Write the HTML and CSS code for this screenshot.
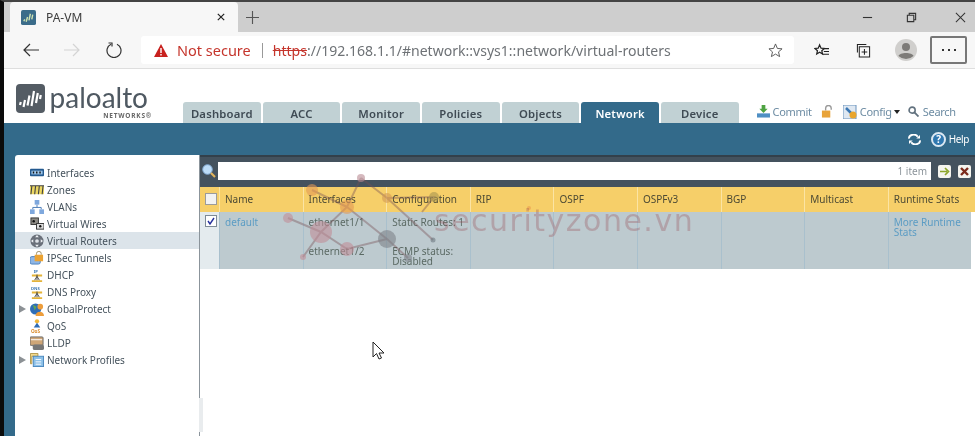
FILE: index.html
```html
<!DOCTYPE html>
<html lang="en">
<head>
<meta charset="utf-8">
<title>PA-VM</title>
<link rel="stylesheet" href="styles.css">
</head>
<body>
<div class="frame">
  <div class="tabstrip">
    <div class="tab">
      <svg class="favicon" viewBox="0 0 16 16"><rect width="16" height="16" rx="2" fill="#3b6c8a"/><path d="M3 12l1-2M5.500 12.500l1.500-5M8.500 11l1.500-7M11.500 10l1-5" stroke="#cfe3b0" stroke-width="1.500"/></svg>
      <span class="tab-title">PA-VM</span>
      <svg class="tab-close" viewBox="0 0 10 10"><path d="M1 1l8 8M9 1l-8 8" stroke="#222" stroke-width="1.500"/></svg>
    </div>
    <svg class="newtab" viewBox="0 0 14 14"><path d="M7 0v14M0 7h14" stroke="#555" stroke-width="1.200"/></svg>
    <div class="winbtns">
      <svg class="win" viewBox="0 0 12 12"><path d="M1 6h10" stroke="#333" stroke-width="1.200"/></svg>
      <svg class="win" viewBox="0 0 12 12"><path d="M1.500 3.500h7v7h-7zM3.500 3.500v-2h7v7h-2" fill="none" stroke="#333" stroke-width="1.200"/></svg>
      <svg class="win win-close" viewBox="0 0 12 12"><path d="M1 1l10 10M11 1L1 11" stroke="#333" stroke-width="1.100"/></svg>
    </div>
  </div>
  <div class="toolbar">
    <svg class="nav nav-back" viewBox="0 0 16 14"><path d="M16 7H1M7 1L1 7l6 6" fill="none" stroke="#333" stroke-width="1.200"/></svg>
    <svg class="nav nav-fwd" viewBox="0 0 16 14"><path d="M0 7h15M9 1l6 6-6 6" fill="none" stroke="#d4d4d4" stroke-width="1.200"/></svg>
    <svg class="nav nav-reload" viewBox="0 0 16 16"><path d="M5 2.200A7 7 0 1 0 11 2.200" fill="none" stroke="#333" stroke-width="1.200"/><path d="M2.500 1H6v3.500" fill="none" stroke="#333" stroke-width="1.200"/></svg>
    <div class="address">
      <svg class="warn" viewBox="0 0 14 13"><path d="M7 0l7 13H0z" fill="#c8211e"/><path d="M6.300 4h1.400v5H6.300zM6.300 10h1.400v1.500H6.300z" fill="#fff"/></svg>
      <span class="notsecure">Not secure</span>
      <span class="divider"></span>
      <span class="url"><s class="https">https</s>://192.168.1.1/#network::vsys1::network/virtual-routers</span>
      <svg class="addr-star" viewBox="0 0 16 16"><path d="M8 1l2 4.800 5 .4-3.800 3.300 1.200 5L8 11.800 3.600 14.500l1.200-5L1 6.200l5-.4z" fill="none" stroke="#555" stroke-width="1"/></svg>
    </div>
    <svg class="tool tool-fav" viewBox="0 0 16 16"><path d="M6 2l1.500 3.500 3.500.3-2.700 2.400.8 3.500L6 9.900 2.900 11.700l.8-3.500L1 5.800l3.500-.3z" fill="none" stroke="#222" stroke-width="1.300"/><path d="M10.500 6H16M10.500 9H16M9 12h7" stroke="#222" stroke-width="1.100"/></svg>
    <svg class="tool tool-col" viewBox="0 0 16 16"><path d="M1.500 10V1.500H11M3.500 4h11v11h-11z" fill="none" stroke="#222" stroke-width="1.100"/><path d="M9 6.500v6M6 9.500h6" stroke="#222" stroke-width="1.100"/></svg>
    <svg class="avatar" viewBox="0 0 22 22"><circle cx="11" cy="11" r="11" fill="#d0cfcd"/><circle cx="11" cy="8" r="4" fill="#7d7b78"/><path d="M3.500 17c1-4 14-4 15 0a11 11 0 0 1-15 0z" fill="#7d7b78"/></svg>
    <div class="menu-btn"><i></i><i></i><i></i></div>
  </div>
  <div class="page">
    <div class="pa-head">
      <div class="logo">
        <svg class="logo-mark" viewBox="0 0 29 29"><rect width="29" height="29" rx="4" fill="#545c64"/><path d="M4 21l.8-3M7.500 23l1.500-7M11.500 21.500l2-10M15.500 22l2.500-15M20 19l1.800-10M24 15l.8-4" stroke="#fff" stroke-width="2.200"/></svg>
        <div class="logo-words">
          <span class="logo-name">paloalto</span>
          <span class="logo-sub">NETWORKS&reg;</span>
        </div>
      </div>
      <nav class="pa-tabs">
        <span class="pa-tab">Dashboard</span>
        <span class="pa-tab">ACC</span>
        <span class="pa-tab">Monitor</span>
        <span class="pa-tab">Policies</span>
        <span class="pa-tab">Objects</span>
        <span class="pa-tab is-active">Network</span>
        <span class="pa-tab">Device</span>
      </nav>
      <div class="pa-tools">
        <svg class="pa-i" viewBox="0 0 14 14"><path d="M5 0h4v4h2.500L7 8.500 2.500 4H5z" fill="#4ea342"/><path d="M0 9h14v4.500H0z" fill="#4f8fc4"/></svg>
        <span class="pa-tool">Commit</span>
        <svg class="pa-i pa-lock" viewBox="0 0 14 14"><path d="M5 6V3.500a3 3 0 0 1 6 0V5" fill="none" stroke="#999" stroke-width="1.500"/><rect x="1" y="6" width="9" height="7.500" fill="#e8a33a"/></svg>
        <svg class="pa-i pa-config" viewBox="0 0 14 14"><rect width="13" height="14" fill="#dfe8f2" stroke="#6b93bd"/><path d="M3 3l8 8" stroke="#3c78b4" stroke-width="2.500"/><circle cx="10" cy="10" r="3.500" fill="#e9a52d"/></svg>
        <span class="pa-tool">Config</span>
        <span class="caret"></span>
        <svg class="pa-i pa-search" viewBox="0 0 12 12"><circle cx="4.500" cy="4.500" r="3.300" fill="none" stroke="#62727f" stroke-width="1.800"/><path d="M7 7l4.500 4.500" stroke="#62727f" stroke-width="2"/></svg>
        <span class="pa-tool pa-tool-search">Search</span>
      </div>
    </div>
    <div class="bluebar">
      <svg class="refresh" viewBox="0 0 14 12"><path d="M1 5a5 4 0 0 1 9.500-2M13 7a5 4 0 0 1-9.500 2" fill="none" stroke="#fff" stroke-width="2"/><path d="M13 1v4H9zM1 11V7h4z" fill="#fff"/></svg>
      <span class="helpi">?</span>
      <span class="helpt">Help</span>
    </div>
    <div class="workspace">
      <aside class="tree">
        <div class="row"><span class="tw"></span><svg class="ri" viewBox="0 0 15 15"><rect y="3" width="15" height="8" rx="1" fill="#23598f"/><rect x="1.500" y="5" width="12" height="4" fill="#9cc4e8"/><path d="M3 7h1.500M6.500 7H8M10 7h1.500" stroke="#111" stroke-width="2"/></svg><span>Interfaces</span></div>
        <div class="row"><span class="tw"></span><svg class="ri" viewBox="0 0 15 15"><rect y="3" width="15" height="9" fill="#ecd763"/><path d="M1 12l1-9M5 12l1-9M9 12l1-9M13 12l1-9M0 3h15" stroke="#444" stroke-width="1.200"/></svg><span>Zones</span></div>
        <div class="row"><span class="tw"></span><svg class="ri" viewBox="0 0 15 15"><path d="M7.500 5v3M3 10V8h9v2" fill="none" stroke="#4779b6"/><rect x="5" y="0" width="5" height="5" fill="#7fa8dd"/><rect y="10" width="5" height="5" fill="#7fa8dd"/><rect x="10" y="10" width="5" height="5" fill="#7fa8dd"/></svg><span>VLANs</span></div>
        <div class="row"><span class="tw"></span><svg class="ri" viewBox="0 0 15 15"><rect x="1" y="1" width="8" height="7" fill="#8d8a84" stroke="#333"/><rect x="7" y="7" width="8" height="6" fill="#ddd" stroke="#333"/><circle cx="4" cy="4.500" r="1.300" fill="#111"/><circle cx="11" cy="10" r="1.300" fill="#111"/></svg><span>Virtual Wires</span></div>
        <div class="row is-sel"><span class="tw"></span><svg class="ri" viewBox="0 0 15 15"><circle cx="7.500" cy="7.500" r="7" fill="#6a707a"/><circle cx="7.500" cy="7.500" r="2" fill="#dfe3e8"/><path d="M7.500 1l2 2.500h-4zM7.500 14l2-2.500h-4zM1 7.500l2.500-2v4zM14 7.500l-2.500-2v4z" fill="#eef1f4"/></svg><span>Virtual Routers</span></div>
        <div class="row"><span class="tw"></span><svg class="ri" viewBox="0 0 15 15"><rect y="6" width="11" height="8" rx="2" fill="#8eb6e6" stroke="#4b80bb"/><path d="M7 4V2.500a2.500 2 0 0 1 5 0V4" fill="none" stroke="#9a8a60"/><rect x="5" y="4" width="9" height="7" fill="#eba333"/></svg><span>IPSec Tunnels</span></div>
        <div class="row"><span class="tw"></span><svg class="ri" viewBox="0 0 15 15"><path d="M2 7h11v2H2zM2 13h11v2H2z" fill="#e4b339"/><path d="M7.500 7v6M5 13l2.500-4 2.500 4" fill="none" stroke="#444"/><text x="4" y="5" class="ri-t">IP</text></svg><span>DHCP</span></div>
        <div class="row"><span class="tw"></span><svg class="ri" viewBox="0 0 15 15"><path d="M2 7h11v2H2zM2 13h11v2H2z" fill="#e4b339"/><path d="M7.500 7v6M5 13l2.500-4 2.500 4" fill="none" stroke="#444"/><text x="1" y="5" class="ri-t">DNS</text></svg><span>DNS Proxy</span></div>
        <div class="row"><span class="tw tw-on"></span><svg class="ri" viewBox="0 0 15 15"><circle cx="6" cy="7.500" r="6" fill="#2f6db6"/><path d="M3 3l4 2-2 4z" fill="#62a552"/><circle cx="11" cy="5" r="3" fill="#ed9d3b"/><path d="M6 15c0-6 9-6 9 0z" fill="#ed9d3b"/></svg><span>GlobalProtect</span></div>
        <div class="row"><span class="tw"></span><svg class="ri" viewBox="0 0 15 15"><circle cx="7.500" cy="2.500" r="2.300" fill="#f0b636"/><path d="M4 9l3.500-5L11 9z" fill="#2f6db6"/><text x="1" y="14.500" class="ri-q">QoS</text></svg><span>QoS</span></div>
        <div class="row"><span class="tw"></span><svg class="ri" viewBox="0 0 15 15"><rect y="1" width="14" height="9" rx="1" fill="#cfa677" stroke="#666"/><rect x="3" y="9" width="12" height="6" rx="2" fill="#777"/><path d="M1 4h12" stroke="#fff"/></svg><span>LLDP</span></div>
        <div class="row"><span class="tw tw-on"></span><svg class="ri" viewBox="0 0 15 15"><path d="M.5.500h8v3H2v8H.5z" fill="#f3d98b" stroke="#b29545"/><rect x="3.500" y="3.500" width="11" height="11" fill="#8cc0e8" stroke="#4a87bd"/><path d="M6 7h6M6 9.500h6M6 12h6" stroke="#fff"/></svg><span>Network Profiles</span></div>
      </aside>
      <section class="main">
        <div class="filter">
          <svg class="filter-i" viewBox="0 0 14 14"><circle cx="5.500" cy="5.500" r="4.800" fill="#bcdcf8" stroke="#7fa6cf"/><path d="M9 9l4 4" stroke="#e2b45b" stroke-width="2.200"/></svg>
          <div class="filter-box"><span>1 item</span></div>
          <svg class="filter-btn" viewBox="0 0 13 13"><rect width="13" height="13" rx="2" fill="#f5f5ef"/><path d="M2 6.500h7M7 3l3.500 3.500L7 10" fill="none" stroke="#8da62b" stroke-width="1.700"/></svg>
          <svg class="filter-btn filter-btn-x" viewBox="0 0 13 13"><rect width="13" height="13" rx="2" fill="#f5f5ef"/><path d="M3 3l7 7M10 3l-7 7" stroke="#7c2b1c" stroke-width="2.400"/></svg>
        </div>
        <div class="grid grid-head">
          <div class="cell cell-check"><span class="box"></span></div>
          <div class="cell">Name</div><div class="cell">Interfaces</div><div class="cell">Configuration</div>
          <div class="cell">RIP</div><div class="cell">OSPF</div><div class="cell">OSPFv3</div>
          <div class="cell">BGP</div><div class="cell">Multicast</div><div class="cell">Runtime Stats</div>
        </div>
        <div class="grid grid-row">
          <div class="cell cell-check"><span class="box box-on"><svg viewBox="0 0 10 10"><path d="M2 5l2 3 4-6" fill="none" stroke="#26309c" stroke-width="1.400"/></svg></span></div>
          <div class="cell link">default</div>
          <div class="cell stack"><span>ethernet1/1</span><span>ethernet1/2</span></div>
          <div class="cell stack"><span>Static Routes: 1</span><span>ECMP status:<br>Disabled</span></div>
          <div class="cell"></div><div class="cell"></div><div class="cell"></div><div class="cell"></div><div class="cell"></div>
          <div class="cell link">More Runtime Stats</div>
        </div>
      </section>
    </div>
  </div>
  <svg class="mark-graph" viewBox="0 0 260 110">
    <g class="mg-lines">
      <path d="M81 8L67 37 41 62 23 87M8 48l33 14 26 17 40-10M67 37l40 32M81 8l26 20 46 42M32 20l35 17M107 28l47-1-12 15M107 69l21 19"/>
    </g>
    <circle cx="32" cy="20" r="6" fill="#e39a55"/><circle cx="81" cy="8" r="4" fill="#b98a92"/><circle cx="67" cy="37" r="7" fill="#e39a55"/><circle cx="107" cy="28" r="5" fill="#d39a55"/><circle cx="154" cy="27" r="5" fill="#a99550"/><circle cx="8" cy="48" r="5" fill="#bf8e98"/><circle cx="41" cy="62" r="11" fill="#bf8e98"/><circle cx="107" cy="69" r="9" fill="#7d8289"/><circle cx="67" cy="79" r="7" fill="#bf8e98"/><circle cx="23" cy="87" r="3" fill="#bf8e98"/><circle cx="153" cy="70" r="2.500" fill="#6e7982"/><circle cx="128" cy="88" r="4" fill="#7d8289"/><circle cx="249" cy="38" r="2" fill="#eb9b4d"/>
  </svg>
  <div class="mark-text">securityzone.vn</div>
  <svg class="cursor" viewBox="0 0 13 19"><path d="M1 1v15l3.500-3.500L7 18l2.500-1-2.500-5h5z" fill="#fff" stroke="#222"/></svg>
  <div class="scrollgrip"></div>
</div>
</body>
</html>
```
FILE: styles.css
```css
* { box-sizing: border-box; }
html, body { margin: 0; height: 100%; overflow: hidden; background: #fff; }
.frame {
  position: relative;
  width: 975px;
  height: 436px;
  overflow: hidden;
  display: flex;
  flex-direction: column;
  border-top: 2px solid #444;
  border-left: 4px solid #0b0b0b;
  font-family: "Noto Sans", "Liberation Sans", sans-serif;
  filter: blur(0.35px);
}
/* browser chrome */
.tabstrip {
  height: 30px;
  background: #cecece;
  display: flex;
  align-items: center;
  padding-left: 6px;
  flex: none;
}
.tab {
  width: 228px;
  height: 30px;
  background: #f7f7f7;
  border-radius: 4px 4px 0 0;
  display: flex;
  align-items: center;
  padding: 0 12px 0 11px;
  flex: none;
}
.favicon { width: 15px; height: 15px; flex: none; }
.tab-title { margin-left: 10px; font-size: 12px; color: #3c3c3c; flex: 1; }
.tab-close { width: 8px; height: 8px; margin-right: 1px; }
.newtab { width: 13px; height: 13px; margin-left: 8px; flex: none; }
.winbtns { margin-left: auto; display: flex; align-items: center; gap: 33px; padding-right: 9px; }
.win { width: 11px; height: 11px; display: block; }
.win-close { margin-left: 5px; }
.toolbar {
  height: 37px;
  background: #f7f7f7;
  border-bottom: 1px solid #dedede;
  display: flex;
  align-items: center;
  flex: none;
}
.nav { flex: none; display: block; }
.nav-back { width: 16px; height: 14px; margin-left: 19px; }
.nav-fwd { width: 16px; height: 14px; margin-left: 25px; }
.nav-reload { width: 16px; height: 16px; margin-left: 26px; }
.address {
  width: 653px;
  height: 28px;
  margin-left: 19px;
  background: #fff;
  border-radius: 3px;
  display: flex;
  align-items: center;
  padding-left: 13px;
  flex: none;
}
.warn { width: 14px; height: 13px; flex: none; }
.notsecure { margin-left: 9px; color: #c5352c; font-size: 14.5px; }
.divider { width: 1px; height: 15px; background: #999; margin: 0 10px 0 11px; }
.url { color: #6e7276; font-size: 14.05px; white-space: nowrap; }
.https { color: #c5352c; }
.addr-star { width: 15px; height: 15px; margin-left: auto; margin-right: 11px; flex: none; }
.tool { width: 15px; height: 15px; flex: none; }
.tool-fav { margin-left: 20px; }
.tool-col { margin-left: 27px; }
.avatar { width: 22px; height: 22px; margin-left: 24px; flex: none; }
.menu-btn {
  width: 37px;
  height: 28px;
  margin-left: 13px;
  border: 2px solid #777;
  border-radius: 2px;
  display: flex;
  align-items: center;
  justify-content: center;
  gap: 4px;
  flex: none;
}
.menu-btn i { width: 2px; height: 2px; background: #333; display: block; }
/* PAN header */
.page { flex: 1; display: flex; flex-direction: column; min-height: 0; }
.pa-head { height: 54px; display: flex; align-items: flex-end; flex: none; background: #fff; }
.logo { width: 179px; align-self: stretch; display: flex; padding: 15px 0 0 12px; flex: none; }
.logo-mark { width: 29px; height: 29px; flex: none; }
.logo-words { display: flex; flex-direction: column; margin-left: 6px; align-items: flex-end; width: 97px; }
.logo-name { font-family: "Lato", "Noto Sans", sans-serif; font-size: 28px; line-height: 27px; color: #4f5962; height: 29px; }
.logo-sub { font-size: 6.500px; line-height: 6px; color: #666; letter-spacing: .8px; font-weight: 700; margin-right: -4px; white-space: nowrap; }
.pa-tabs { display: flex; gap: 2px; flex: none; }
.pa-tab {
  width: 77.670px;
  height: 21px;
  background: #c1d1d4;
  border-radius: 3px 3px 0 0;
  color: #3f4b54;
  font-size: 11.3px;
  font-weight: 600;
  text-align: center;
  line-height: 23px;
  letter-spacing: .2px;
}
.pa-tab.is-active { background: #336a8a; color: #fff; }
.pa-tools { display: flex; align-items: center; height: 21px; margin-left: 18px; color: #6d8ca3; font-size: 11px; letter-spacing: -.3px; padding-bottom: 2px; }
.pa-i { width: 13px; height: 13px; flex: none; }
.pa-tool { margin-left: 3px; }
.pa-tool-search { margin-left: 4px; }
.pa-lock { margin-left: 9px; }
.pa-config { margin-left: 9px; width: 14px; height: 14px; }
.caret { width: 0; height: 0; border: 3.500px solid transparent; border-top: 4px solid #222; border-bottom: 0; margin: 1px 8px 0 2px; }
.pa-search { width: 11px; height: 11px; }
.bluebar {
  height: 32px;
  background: #336a8a;
  display: flex;
  align-items: flex-end;
  justify-content: flex-end;
  padding: 0 6px 10px 0;
  color: #fff;
  flex: none;
  font-size: 10px;
  letter-spacing: -.4px;
}
.refresh { width: 13px; height: 11px; margin-right: 10px; }
.helpi {
  width: 15px;
  height: 15px;
  border-radius: 50%;
  background: #2f78b0;
  border: 2px solid #dbe8f2;
  font-size: 10px;
  font-weight: 700;
  line-height: 11px;
  text-align: center;
  margin-right: 3px;
  margin-bottom: -2px;
}
.helpt { line-height: 12px; }
/* workspace */
.workspace {
  flex: 1;
  min-height: 0;
  display: flex;
  background: #336a8a;
  padding-left: 11px;
}
.tree {
  width: 185px;
  background: #fff;
  border-right: 1px solid #8b949b;
  border-radius: 3px 0 0 0;
  padding-top: 9px;
  flex: none;
  font-size: 10px;
  color: #45525c;
}
.row { height: 17px; display: flex; align-items: center; padding-left: 4px; white-space: nowrap; }
.row.is-sel { background: #dce4ea; }
.tw { width: 11px; flex: none; }
.tw-on { width: 0; height: 0; border: 4px solid transparent; border-left: 7px solid #8c9195; border-right: 0; margin-right: 4px; }
.ri { width: 14px; height: 14px; margin-right: 3px; flex: none; }
.ri-t { font: 700 4.500px "Noto Sans", sans-serif; fill: #3c78b4; }
.ri-q { font: 700 5px "Noto Sans", sans-serif; fill: #d98b2a; }
.main { flex: 1; min-width: 0; background: #fff; padding-right: 4px; display: flex; flex-direction: column; }
.filter {
  height: 32px;
  margin-right: -4px;
  background: #44525e;
  border-top: 2px solid #33404b;
  display: flex;
  align-items: center;
  padding: 0 0 2px 2px;
  flex: none;
}
.filter-i { width: 14px; height: 14px; flex: none; }
.filter-box {
  width: 713px;
  height: 18px;
  margin-left: 2px;
  background: #fff;
  font-size: 10px;
  color: #8c949a;
  text-align: right;
  padding-right: 4px;
  line-height: 19px;
  flex: none;
}
.filter-btn { width: 13px; height: 13px; margin-left: 7px; flex: none; }
.filter-btn-x { margin-left: 7px; }
.grid { display: grid; grid-template-columns: 20px repeat(9, 83.6px); font-size: 10px; flex: none; }
.grid-head { height: 25px; background: #f6cf69; color: #4c4a34; margin-right: -4px; }
.grid-head .cell { border-right: 1px solid #fbe4a4; line-height: 25px; padding-left: 5px; }
.grid-row { height: 57px; background: #bdcacf; color: #5b6a64; }
.grid-row .cell { border-right: 1px solid #a9c0cd; padding: 5px 5px 0; line-height: 10px; }
.cell:last-child { border-right: 0; }
.grid-head .cell-check, .grid-row .cell-check { line-height: 0; }
.grid-head .cell-check { padding: 6px 0 0 5px; }
.grid-row .cell-check { background: #e4ebee; padding: 3px 0 0 5px; }
.box { display: block; width: 12px; height: 12px; background: #f2f2f2; border: 1px solid #9b9b9b; }
.box-on { background: #fff; border-color: #7d8a96; }
.box-on svg { display: block; width: 10px; height: 10px; }
.link { color: #5b9cc4; }
.grid-row .stack { display: flex; flex-direction: column; gap: 19px; }
/* watermark and overlays */
.mark-graph { position: absolute; left: 276px; top: 168px; width: 260px; height: 110px; pointer-events: none; }
.mg-lines path { fill: none; stroke: rgba(120, 80, 85, .4); stroke-width: 2; }
.mark-graph circle { opacity: .6; }
.mark-text {
  position: absolute;
  left: 430px;
  top: 201px;
  font-family: "DejaVu Sans", sans-serif;
  font-size: 30px;
  line-height: 36px;
  letter-spacing: 1.500px;
  color: rgba(150, 70, 80, .3);
  white-space: nowrap;
}
.cursor { position: absolute; left: 368px; top: 339px; width: 13px; height: 19px; }
.scrollgrip { position: absolute; left: 195px; top: 396px; width: 4px; height: 34px; background: #e9ecee; }
```
